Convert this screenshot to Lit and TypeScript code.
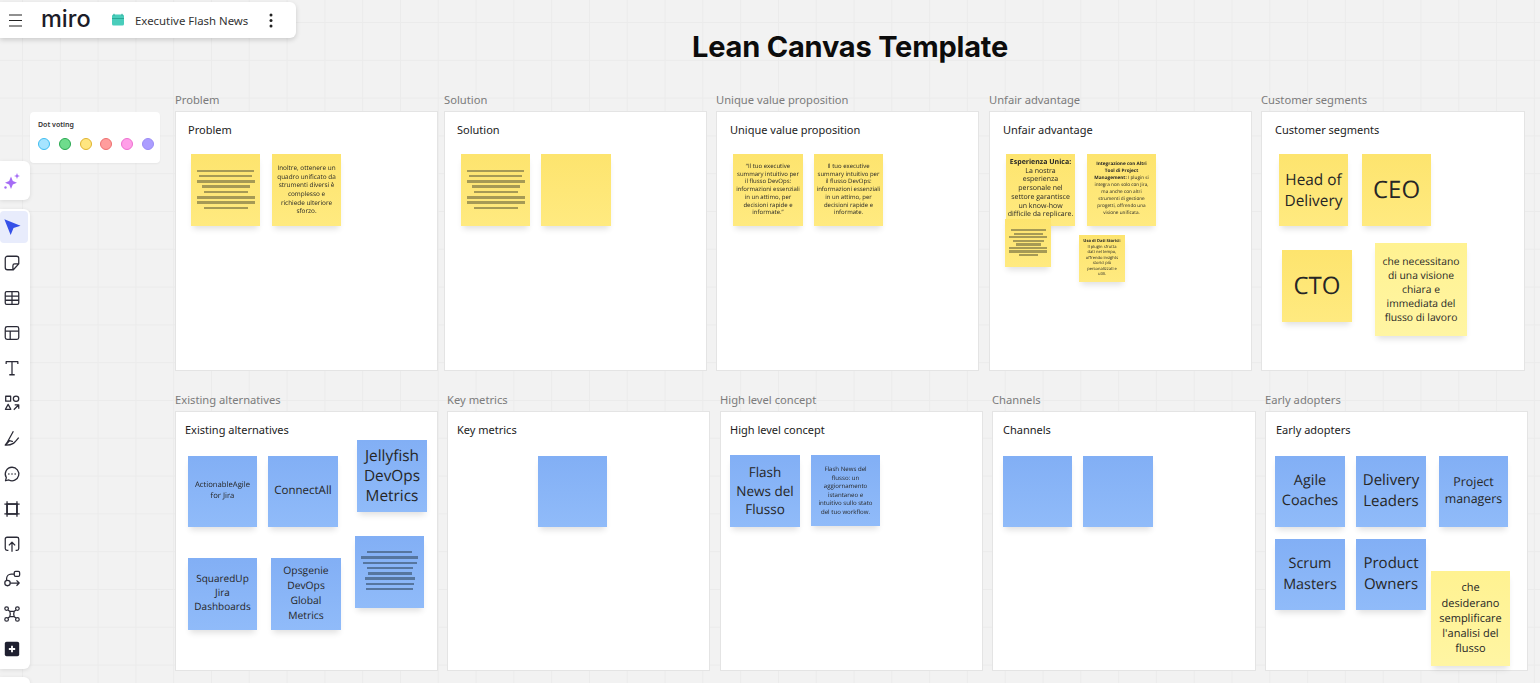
import { LitElement, html, css, svg } from "lit";
import { customElement } from "lit/decorators.js";

type Note = { x: number; y: number; w: number; h: number; c: "y" | "b" | "l"; t?: string; b?: string; fs?: number; lh?: number; dy?: number; lines?: number[]; lg?: number; lt?: number };

const FR: [string, number, number, number, number, number][] = [
  ["Problem", 175, 111, 263, 260, 13],
  ["Solution", 444, 111, 263, 260, 13],
  ["Unique value proposition", 716, 111, 263, 260, 14],
  ["Unfair advantage", 989, 111, 263, 260, 14],
  ["Customer segments", 1261, 111, 264, 260, 14],
  ["Existing alternatives", 175, 411, 263, 260, 10],
  ["Key metrics", 447, 411, 263, 260, 10],
  ["High level concept", 720, 411, 263, 260, 10],
  ["Channels", 992, 411, 264, 260, 11],
  ["Early adopters", 1265, 411, 263, 260, 11],
];

const L8 = [57, 53, 58, 48, 44, 58, 58, 44];
const NOTES: Note[] = [
  { x: 191, y: 154, w: 69, h: 72, c: "y", lines: L8, lg: 5.35, lt: 15.5 },
  { x: 272, y: 154, w: 69, h: 72, c: "y", fs: 6.4, lh: 8.7, t: "Inoltre, ottenere un\nquadro unificato da\nstrumenti diversi è\ncomplesso e\nrichiede ulteriore\nsforzo." },
  { x: 461, y: 154, w: 69, h: 72, c: "y", lines: L8, lg: 5.35, lt: 15.5 },
  { x: 541, y: 154, w: 70, h: 72, c: "y" },
  { x: 733, y: 154, w: 70, h: 72, c: "y", fs: 6, lh: 7.8, t: "“Il tuo executive\nsummary intuitivo per\nil flusso DevOps:\ninformazioni essenziali\nin un attimo, per\ndecisioni rapide e\ninformate.”" },
  { x: 814, y: 154, w: 69, h: 72, c: "y", fs: 6, lh: 7.8, t: "Il tuo executive\nsummary intuitivo per\nil flusso DevOps:\ninformazioni essenziali\nin un attimo, per\ndecisioni rapide e\ninformate." },
  { x: 1006, y: 154, w: 69, h: 72, c: "y", fs: 7, lh: 8.7, dy: 1, b: "Esperienza Unica:", t: "La nostra\nesperienza\npersonale nel\nsettore garantisce\nun know-how\ndifficile da replicare." },
  { x: 1087, y: 154, w: 69, h: 72, c: "y", fs: 4.7, lh: 7, dy: 2, b: "Integrazione con Altri\nTool di Project\nManagement:", t: " I plugin si\nintegra non solo con Jira,\nma anche con altri\nstrumenti di gestione\nprogetti, offrendo una\nvisione unificata." },
  { x: 1005, y: 219, w: 46, h: 48, c: "y", lines: [35, 29, 38, 31, 25, 38, 38, 19], lg: 3.55, lt: 10 },
  { x: 1079, y: 235, w: 46, h: 47, c: "y", fs: 4.1, lh: 5.6, b: "Uso di Dati Storici:", t: "Il plugin sfrutta\ndati nel tempo,\noffrendo insights\nstorici più\npersonalizzati e\nutili." },
  { x: 1279, y: 154, w: 69, h: 72, c: "y", fs: 15.4, lh: 21, t: "Head of\nDelivery" },
  { x: 1362, y: 154, w: 69, h: 72, c: "y", fs: 24, lh: 32, t: "CEO" },
  { x: 1282, y: 250, w: 70, h: 72, c: "y", fs: 24, lh: 32, t: "CTO" },
  { x: 1375, y: 243, w: 92, h: 93, c: "l", fs: 10.3, lh: 14, t: "che necessitano\ndi una visione\nchiara e\nimmediata del\nflusso di lavoro" },
  { x: 188, y: 456, w: 69, h: 71, c: "b", fs: 7.7, lh: 11.5, dy: 1, t: "ActionableAgile\nfor Jira" },
  { x: 268, y: 456, w: 70, h: 71, c: "b", fs: 11.5, lh: 15, dy: 2, t: "ConnectAll" },
  { x: 357, y: 440, w: 70, h: 72, c: "b", fs: 15.4, lh: 20, t: "Jellyfish\nDevOps\nMetrics" },
  { x: 188, y: 558, w: 69, h: 72, c: "b", fs: 10, lh: 14, dy: 4, t: "SquaredUp\nJira\nDashboards" },
  { x: 271, y: 558, w: 70, h: 72, c: "b", fs: 10.3, lh: 15, t: "Opsgenie\nDevOps\nGlobal\nMetrics" },
  { x: 355, y: 536, w: 69, h: 72, c: "b", lines: [45, 57, 54, 46, 44, 50, 48, 47], lg: 5.3, lt: 15 },
  { x: 538, y: 456, w: 69, h: 71, c: "b" },
  { x: 730, y: 455, w: 70, h: 72, c: "b", fs: 13.5, lh: 18.5, t: "Flash\nNews del\nFlusso" },
  { x: 811, y: 455, w: 69, h: 71, c: "b", fs: 6.1, lh: 8.5, t: "Flash News del\nflusso: un\naggiornamento\nistantaneo e\nintuitivo sullo stato\ndel tuo workflow." },
  { x: 1003, y: 456, w: 69, h: 71, c: "b" },
  { x: 1083, y: 456, w: 70, h: 71, c: "b" },
  { x: 1275, y: 456, w: 70, h: 71, c: "b", fs: 14.4, lh: 20, dy: 2, t: "Agile\nCoaches" },
  { x: 1356, y: 456, w: 70, h: 71, c: "b", fs: 15, lh: 21, dy: 2, t: "Delivery\nLeaders" },
  { x: 1439, y: 456, w: 69, h: 71, c: "b", fs: 12.4, lh: 17, dy: 3, t: "Project\nmanagers" },
  { x: 1275, y: 539, w: 70, h: 71, c: "b", fs: 14.4, lh: 21, dy: 1, t: "Scrum\nMasters" },
  { x: 1356, y: 539, w: 70, h: 71, c: "b", fs: 15, lh: 21, dy: 1, t: "Product\nOwners" },
  { x: 1431, y: 571, w: 79, h: 95, c: "l", fs: 11, lh: 15.2, t: "che\ndesiderano\nsemplificare\nl'analisi del\nflusso" },
];

const DOTS: [string, string][] = [
  ["#a6e4ff", "#3fbdf0"],
  ["#6fdc8c", "#27a84f"],
  ["#ffe680", "#e0b32e"],
  ["#ff9d9d", "#ee6f6f"],
  ["#ff9fe8", "#ee70d0"],
  ["#ab9dff", "#9b8cf5"],
];

const ICONS = [
  svg`<path d="M1.500 1.500 19.500 8.700l-7.800 2.500-3.200 7.800z" fill="#3550e8" stroke="none"/>`,
  svg`<path d="M17.500 11V5a2.500 2.500 0 0 0-2.500-2.500H5A2.500 2.500 0 0 0 2.500 5v10A2.500 2.500 0 0 0 5 17.500h6.500l6-6.500h-4.500a2 2 0 0 0-2 2v4.500"/>`,
  svg`<rect x="2.500" y="3" width="15" height="14" rx="1.500"/><path d="M2.500 8h15M2.500 12.500h15M10 3v14"/>`,
  svg`<rect x="2.500" y="3" width="15" height="14" rx="2"/><path d="M2.500 8h15M8 8v9"/>`,
  svg`<path d="M3.500 5.500V3h13v2.500M10 3v14.500M7 17.500h6"/>`,
  svg`<rect x="3" y="2.500" width="5.500" height="5.500"/><circle cx="14.500" cy="5.300" r="3"/><path d="M5.700 11.500 8.700 17H2.700zM12 17.500l5-5M13 12h4.500v4.500"/>`,
  svg`<path d="M11.500 2.500 6 12.500c-1 2-2.500 4-3.500 5.500 3.500.2 6.500-.5 9-2 2-1.300 4-4 6-6.500M6 12.500l5 1.500M2.500 18 7 13.500"/>`,
  svg`<path d="M10 2.500a7.500 7.500 0 1 1-3.500 14.100L2.800 17.500l.9-3.500A7.500 7.500 0 0 1 10 2.500z"/><path d="M6.500 10h.01M10 10h.01M13.500 10h.01" stroke-width="1.800" stroke-linecap="round"/>`,
  svg`<path d="M4.500 1.500v17M15.500 1.500v17M1.500 4.500h17M1.500 15.500h17" /><path d="M4.500 4.500h11v11h-11z" stroke-width="1.800"/>`,
  svg`<path d="M6 17H4.500a2 2 0 0 1-2-2V4.500a2 2 0 0 1 2-2h11a2 2 0 0 1 2 2V15a2 2 0 0 1-2 2H14M10 18.500V8M6.500 11.500 10 8l3.500 3.500"/>`,
  svg`<rect x="12.500" y="1.500" width="6" height="5.500" rx="1.500"/><circle cx="5" cy="14.500" r="3"/><path d="M12.500 4.500H9a5 5 0 0 0-5 5v2M8 14.500h10M15 11.500l3 3-3 3"/>`,
  svg`<circle cx="4" cy="4" r="2"/><circle cx="16" cy="4" r="2"/><circle cx="4" cy="16" r="2"/><circle cx="16" cy="16" r="2"/><path d="M5.500 5.500 7.500 7h5l2-1.500M5.500 14.500l2-1.500h5l2 1.500M7.500 7c.8 2 .8 4 0 6M12.500 7c-.8 2-.8 4 0 6"/>`,
  svg`<rect x="2" y="2" width="16" height="16" rx="2" fill="#1f2030" stroke="none"/><path d="M10 6.500v7M6.500 10h7" stroke="#fff" stroke-width="2"/>`,
];

@customElement("app-root")
export class AppRoot extends LitElement {
  static styles = css`
    :host { display: block; width: 1540px; height: 683px; overflow: hidden; font-family: "Noto Sans", sans-serif; }
    .board {
      position: relative; width: 1540px; height: 683px; overflow: hidden;
      background-color: #f2f2f2;
      background-image: linear-gradient(#ebebeb 1px, transparent 1px), linear-gradient(90deg, #ebebeb 1px, transparent 1px);
      background-size: 37.8px 37.8px; background-position: 22px 22px;
    }
    .title { position: absolute; left: 0; right: 0; top: 27px; padding-left: 160px; text-align: center; font: 700 29px/40px "Inter", sans-serif; letter-spacing: -.2px; color: #0c0c0c; }
    .frame { position: absolute; box-sizing: border-box; background: #fff; border: 1px solid #e4e4e4; }
    .label { position: absolute; left: -1px; top: -20px; font-size: 11.2px; line-height: 16px; color: #7b7b7b; white-space: nowrap; }
    .ftitle { position: absolute; top: 10px; font: 400 11px/16px "Noto Sans", sans-serif; color: #222; white-space: nowrap; }
    .note { position: absolute; box-sizing: border-box; display: flex; align-items: center; justify-content: center; flex-direction: column; text-align: center; color: #262626; font-family: "Open Sans", sans-serif; text-rendering: geometricPrecision; box-shadow: 0 5px 6px -2px rgba(0,0,0,.12); }
    .note p { margin: 0; white-space: pre; }
    .note p.tiny { filter: blur(.25px); }
    .note b { font-weight: 700; }
    .y { background: linear-gradient(#fde46e, #ffea80); }
    .l { background: linear-gradient(#fff291, #fff5a3); }
    .b { background: linear-gradient(#82aff5, #90bbf9); }
    .note.lined { justify-content: flex-start; padding: 0; }
    .bar { height: 2.400px; flex: none; filter: blur(.3px); }
    .y .bar { background: #a69a55; }
    .b .bar { background: #56769f; }
    .top { position: absolute; left: 0; top: 2px; width: 296px; height: 36px; box-sizing: border-box; background: #fff; border-radius: 0 6px 6px 0; box-shadow: 0 2px 5px rgba(0,0,0,.16); display: flex; align-items: center; padding-left: 9px; }
    .burger { width: 13px; height: 13px; flex: none; }
    .logo { margin-left: 19px; font: 500 23.500px/24px "Inter", sans-serif; color: #1c1c28; margin-top: -3px; width: 52px; flex: none; }
    .board-ic { margin-left: 18px; flex: none; }
    .bname { margin-left: 10px; font-size: 11.400px; color: #333; white-space: nowrap; }
    .more { margin-left: 21px; flex: none; }
    .vote { position: absolute; left: 30px; top: 112px; width: 130px; height: 51px; box-sizing: border-box; background: #fff; border-radius: 4px; padding: 8px 8px; box-shadow: 0 1px 2px rgba(0,0,0,.05); }
    .vote h4 { margin: 0 0 8px; font: 600 7px/10px "Noto Sans", sans-serif; color: #333; }
    .dots { display: flex; gap: 8.800px; }
    .dot { width: 10px; height: 10px; box-sizing: content-box; border-radius: 50%; border: 1px solid; flex: none; }
    .side { position: absolute; left: 0; width: 30px; background: #fff; border-radius: 0 6px 6px 0; box-shadow: 0 1px 4px rgba(0,0,0,.1); display: flex; flex-direction: column; align-items: center; box-sizing: border-box; }
    .ai { top: 161px; height: 39px; justify-content: center; }
    .ai svg { margin-left: -6px; }
    .tools { top: 209px; height: 460px; padding-top: 2px; }
    .stub { top: 677px; height: 20px; }
    .tool { width: 28px; height: 35.100px; flex: none; display: flex; align-items: center; justify-content: center; border-radius: 4px; margin-right: 2px; }
    .tool.on { background: #e8ecfc; height: 32px; margin-bottom: 2.400px; }
    .tool svg { width: 18px; height: 18px; fill: none; stroke: #2a2a36; stroke-width: 1.400; stroke-linejoin: round; margin-left: -4px; }
  `;

  renderNote(n: Note) {
    const pos = `left:${n.x}px;top:${n.y}px;width:${n.w}px;height:${n.h}px;`;
    if (n.lines) {
      return html`<div class="note ${n.c} lined" style="${pos}gap:${(n.lg ?? 5) - 2.4}px;padding-top:${n.lt ?? 15}px">
        ${n.lines.map((w) => html`<div class="bar" style="width:${w}px"></div>`)}
      </div>`;
    }
    const bold = n.b ? n.b.split("\n") : [];
    const lead = !!n.t?.startsWith(" ");
    const cut = lead ? n.t!.indexOf("\n") : -1;
    return html`<div class="note ${n.c}" style="${pos}font-size:${n.fs ?? 10}px;line-height:${n.lh ?? 12}px;padding-bottom:${n.dy ?? 0}px">
      ${n.t || n.b
        ? html`<p class="${(n.fs ?? 10) < 8 ? "tiny" : ""}">${bold.map((s, i) => html`<b>${s}</b>${i < bold.length - 1 || !lead ? "\n" : ""}`)}${lead
            ? html`<span>${n.t!.slice(0, cut)}</span>${"\n"}<span>${n.t!.slice(cut + 1)}</span>`
            : n.t}</p>`
        : ""}
    </div>`;
  }

  render() {
    return html`<div class="board">
      <div class="title">Lean Canvas Template</div>
      ${FR.map(([name, x, y, w, h, pad]) => html`
        <section class="frame" style="left:${x}px;top:${y}px;width:${w}px;height:${h}px">
          <div class="label">${name}</div>
          <div class="ftitle" style="left:${pad - 1}px">${name}</div>
        </section>`)}
      ${NOTES.map((n) => this.renderNote(n))}

      <header class="top">
        <svg class="burger" viewBox="0 0 13 13" fill="none" stroke="#222" stroke-width="1.200"><path d="M0 1h13M0 6.500h13M0 12h13"/></svg>
        <span class="logo">miro</span>
        <svg class="board-ic" width="14" height="14" viewBox="0 0 14 14"><rect x="1" y="1.500" width="12" height="11" rx="1.500" fill="#49cdbb"/><path d="M1 5.500h12" stroke="#2aa896" stroke-width="1"/><path d="M3 .8v2M11 .8v2" stroke="#2aa896" stroke-width="1"/></svg>
        <span class="bname">Executive Flash News</span>
        <svg class="more" width="4" height="15" viewBox="0 0 4 15" fill="#222"><circle cx="2" cy="2" r="1.500"/><circle cx="2" cy="7.500" r="1.500"/><circle cx="2" cy="13" r="1.500"/></svg>
      </header>

      <aside class="vote">
        <h4>Dot voting</h4>
        <div class="dots">
          ${DOTS.map(([f, s]) => html`<span class="dot" style="background:${f};border-color:${s}"></span>`)}
        </div>
      </aside>

      <div class="side ai">
        <svg width="18" height="18" viewBox="0 0 18 18" fill="#a56cf5"><path d="M8 4.500 9.800 9l4.200 1.800-4.200 1.800L8 17l-1.800-4.400L2 10.800 6.200 9z"/><path d="M14 1l.8 2.200L17 4l-2.200.8L14 7l-.8-2.200L11 4l2.200-.8z"/><circle cx="2.500" cy="15.500" r="1.200"/></svg>
      </div>
      <nav class="side tools">
        ${ICONS.map((ic, i) => html`<div class="tool ${i === 0 ? "on" : ""}"><svg viewBox="0 0 20 20">${ic}</svg></div>`)}
      </nav>
      <div class="side stub"></div>
    </div>`;
  }
}
